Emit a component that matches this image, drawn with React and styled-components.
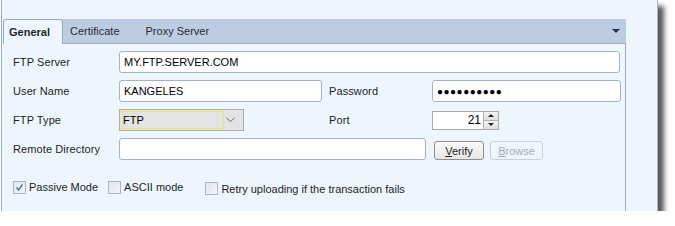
import React from 'react';
import styled, { createGlobalStyle } from 'styled-components';

const GlobalStyle = createGlobalStyle`
  html, body {
    margin: 0;
    padding: 0;
    background: #ffffff;
  }
  body {
    font-family: "Liberation Sans", Arial, sans-serif;
    font-size: 11px;
    color: #1e1e1e;
  }
`;

const Window = styled.div`
  margin-left: 1px;
  width: 657px;
  height: 211px;
  box-sizing: border-box;
  background: #eef5fd;
  border-left: 1px solid #9eabbd;
  border-right: 1px solid #a9b6c7;
  box-shadow: 6px 6px 5px rgba(0, 0, 0, 0.65);
  padding-top: 19px;
  display: flex;
  flex-direction: column;
`;

const TabControl = styled.div`
  margin-left: 1px;
  width: 623px;
  flex: 1;
  display: flex;
  flex-direction: column;
`;

const TabStrip = styled.div`
  position: relative;
  height: 24px;
  display: flex;
  align-items: stretch;
  background: linear-gradient(#bccde3, #bccde3) no-repeat 60px 0 / calc(100% - 60px) 100%;
  border-bottom: 1px solid #9aabc3;
`;

const Tab = styled.div`
  display: flex;
  align-items: center;
  padding: ${p => p.$pad};
  font-weight: ${p => (p.$active ? 'bold' : 'normal')};
  color: ${p => (p.$active ? '#1b2633' : '#2b2b2b')};
  ${p =>
    p.$active &&
    `
    width: 60px;
    box-sizing: border-box;
    margin-bottom: -1px;
    background: #eef5fd;
    border: 1px solid #9aabc3;
    border-bottom: none;
    border-radius: 3px 3px 0 0;
    z-index: 1;
  `}
`;

const StripArrow = styled.div`
  position: absolute;
  right: 6px;
  top: 10px;
  width: 0;
  height: 0;
  border-left: 4px solid transparent;
  border-right: 4px solid transparent;
  border-top: 4px solid #1c3557;
`;

const TabBody = styled.div`
  flex: 1;
  border-right: 1px solid #9aaac0;
  padding: 7px 0 0 10px;
`;

const Row = styled.div`
  display: flex;
  align-items: center;
  height: 22px;
  margin-bottom: 7px;
`;

const Label = styled.div`
  width: ${p => p.$w}px;
  margin-left: ${p => p.$ml || 0}px;
  flex-shrink: 0;
  letter-spacing: 0.1px;
`;

const TextBox = styled.div`
  width: ${p => p.$w}px;
  height: 22px;
  box-sizing: border-box;
  background: #ffffff;
  border: 1px solid #a3b3c9;
  border-radius: 3px;
  display: flex;
  align-items: center;
  padding-left: 4px;
  color: #000;
  font-size: ${p => (p.$dots ? '10px' : '11px')};
  letter-spacing: ${p => (p.$dots ? '0.5px' : '0')};
`;

const Select = styled.div`
  width: 125px;
  height: 22px;
  box-sizing: border-box;
  background: #e3e3e3;
  border: 1px solid #adadad;
  display: flex;
  align-items: center;
  padding: 0 8px 0 2px;
  justify-content: space-between;
`;

const FocusBox = styled.div`
  width: 102px;
  height: 18px;
  box-sizing: border-box;
  border: 1px dotted #3a3a00;
  outline: 1px dotted #e8e800;
  outline-offset: -1px;
  display: flex;
  align-items: center;
  color: #000;
`;

const Spin = styled.div`
  width: 67px;
  height: 19px;
  box-sizing: border-box;
  background: #ffffff;
  border: 1px solid #a9a9a9;
  display: flex;
  align-items: stretch;
`;

const SpinValue = styled.div`
  flex: 1;
  display: flex;
  align-items: center;
  justify-content: flex-end;
  padding-right: 2px;
  color: #000;
  font-size: 12px;
`;

const SpinButtons = styled.div`
  width: 14px;
  display: flex;
  flex-direction: column;
  border-left: 1px solid #b0b0b0;
`;

const SpinButton = styled.div`
  flex: 1;
  background: linear-gradient(#f4f4f4, #dedede);
  border-bottom: ${p => (p.$top ? '1px solid #b0b0b0' : 'none')};
  display: flex;
  align-items: center;
  justify-content: center;
  &::after {
    content: '';
    border-left: 3px solid transparent;
    border-right: 3px solid transparent;
    ${p => (p.$top ? 'border-bottom: 3px solid #222;' : 'border-top: 3px solid #222;')}
  }
`;

const Button = styled.div`
  width: ${p => p.$w}px;
  height: 19px;
  box-sizing: border-box;
  margin-left: ${p => p.$ml}px;
  margin-top: 3px;
  border: 1px solid ${p => (p.$disabled ? '#c4d2e2' : '#8f8f8f')};
  border-radius: 3px;
  background: ${p => (p.$disabled ? '#f0f5fb' : 'linear-gradient(#fbfbfb, #e6e6e6)')};
  color: ${p => (p.$disabled ? '#a3adbb' : '#1e1e1e')};
  display: flex;
  align-items: center;
  justify-content: center;
  u {
    text-decoration: underline;
  }
`;

const CheckRow = styled.div`
  display: flex;
  align-items: center;
  margin-top: 19px;
`;

const CheckItem = styled.label`
  display: flex;
  align-items: center;
  gap: 3px;
  margin-right: ${p => p.$mr}px;
  margin-top: ${p => p.$mt || 0}px;
`;

const Box = styled.span`
  width: 13px;
  height: 13px;
  box-sizing: border-box;
  border: 1px solid #aab6c6;
  background: linear-gradient(135deg, #dfe5ec, #f4f7fa);
  display: flex;
  align-items: center;
  justify-content: center;
`;

const Check = () => (
  <svg width="9" height="9" viewBox="0 0 9 9">
    <path d="M1.5 4.5 L3.5 7 L7.5 1.5" fill="none" stroke="#5d7aa3" strokeWidth="1.6" />
  </svg>
);

const Chevron = () => (
  <svg width="9" height="6" viewBox="0 0 9 6">
    <path d="M0.5 0.8 L4.5 4.6 L8.5 0.8" fill="none" stroke="#606060" strokeWidth="1" />
  </svg>
);

export default function App() {
  return (
    <>
      <GlobalStyle />
      <Window>
        <TabControl>
          <TabStrip>
            <Tab $active $pad="0 0 0 5px">General</Tab>
            <Tab $pad="0 13px 0 7px">Certificate</Tab>
            <Tab $pad="0 0 0 13px">Proxy Server</Tab>
            <StripArrow />
          </TabStrip>
          <TabBody>
            <Row>
              <Label $w={106}>FTP Server</Label>
              <TextBox $w={501}>MY.FTP.SERVER.COM</TextBox>
            </Row>
            <Row>
              <Label $w={106}>User Name</Label>
              <TextBox $w={203}>KANGELES</TextBox>
              <Label $w={103} $ml={7}>Password</Label>
              <TextBox $w={189} $dots>●●●●●●●●●●</TextBox>
            </Row>
            <Row>
              <Label $w={106}>FTP Type</Label>
              <Select>
                <FocusBox>FTP</FocusBox>
                <Chevron />
              </Select>
              <Label $w={103} $ml={85}>Port</Label>
              <Spin>
                <SpinValue>21</SpinValue>
                <SpinButtons>
                  <SpinButton $top />
                  <SpinButton />
                </SpinButtons>
              </Spin>
            </Row>
            <Row>
              <Label $w={106}>Remote Directory</Label>
              <TextBox $w={307} />
              <Button $w={50} $ml={8}><span><u>V</u>erify</span></Button>
              <Button $w={53} $ml={6} $disabled><span><u>B</u>rowse</span></Button>
            </Row>
            <CheckRow>
              <CheckItem $mr={10}>
                <Box><Check /></Box>
                Passive Mode
              </CheckItem>
              <CheckItem $mr={22}>
                <Box />
                ASCII mode
              </CheckItem>
              <CheckItem $mr={0} $mt={3}>
                <Box />
                Retry uploading if the transaction fails
              </CheckItem>
            </CheckRow>
          </TabBody>
        </TabControl>
      </Window>
    </>
  );
}
